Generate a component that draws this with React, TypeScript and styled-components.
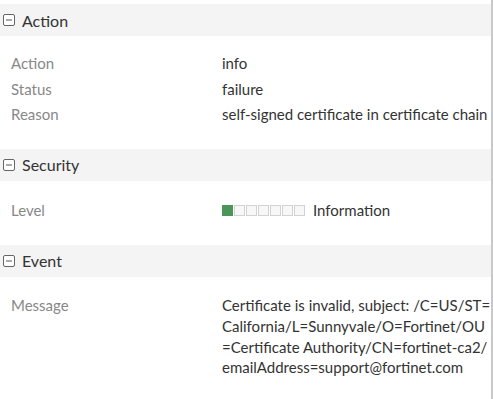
import React from "react";
import styled, { createGlobalStyle } from "styled-components";

const GlobalStyle = createGlobalStyle`
  html, body { margin: 0; padding: 0; background: #fff; }
  body { font-family: Lato, "Open Sans", sans-serif; }
`;

const Panel = styled.div`
  box-sizing: border-box;
  width: 493px;
  min-height: 399px;
  padding-top: 4px;
  border-right: 2px solid #c8c8c8;
`;

const Section = styled.section``;

const SectionHeader = styled.div`
  display: flex;
  align-items: center;
  gap: 7px;
  height: 32px;
  padding-left: 3px;
  background: #f4f4f4;
  color: #333;
  font-size: 16px;
`;

const SectionBody = styled.div<{ $top: number; $bottom: number }>`
  padding: ${(p) => p.$top}px 0 ${(p) => p.$bottom}px;
`;

const Row = styled.div`
  display: grid;
  grid-template-columns: 211px 270px;
  padding: 2.4px 0 2.4px 11px;
  font-size: 15px;
  line-height: 20.7px;
`;

const Label = styled.div`
  color: #888;
`;

const Value = styled.div`
  color: #333;
  word-break: break-all;
`;

const LevelWrap = styled.div`
  display: flex;
  align-items: center;
  color: #333;
`;

const Bars = styled.div`
  display: flex;
  gap: 1px;
  margin-right: 8px;
`;

const Bar = styled.span<{ $on: boolean }>`
  box-sizing: border-box;
  width: 11px;
  height: 11px;
  background: ${(p) => (p.$on ? "#4b9558" : "#f7f7f7")};
  border: 1px solid ${(p) => (p.$on ? "#4b9558" : "#d2d2d2")};
`;

const ToggleIcon = () => (
  <svg width="12" height="12" viewBox="0 0 12 12">
    <rect x="0.5" y="0.5" width="11" height="11" rx="1.5" fill="#fff" stroke="#666" />
    <line x1="3" y1="6" x2="9" y2="6" stroke="#555" strokeWidth="1" />
  </svg>
);

const Header = ({ title }: { title: string }) => (
  <SectionHeader>
    <ToggleIcon />
    <span>{title}</span>
  </SectionHeader>
);

export default function App() {
  return (
    <>
      <GlobalStyle />
      <Panel>
        <Section>
          <Header title="Action" />
          <SectionBody $top={15} $bottom={21.5}>
            <Row>
              <Label>Action</Label>
              <Value>info</Value>
            </Row>
            <Row>
              <Label>Status</Label>
              <Value>failure</Value>
            </Row>
            <Row>
              <Label>Reason</Label>
              <Value>self-signed certificate in certificate chain</Value>
            </Row>
          </SectionBody>
        </Section>
        <Section>
          <Header title="Security" />
          <SectionBody $top={17} $bottom={21.5}>
            <Row>
              <Label>Level</Label>
              <LevelWrap>
                <Bars>
                  {[0, 1, 2, 3, 4, 5, 6].map((i) => (
                    <Bar key={i} $on={i === 0} />
                  ))}
                </Bars>
                <span>Information</span>
              </LevelWrap>
            </Row>
          </SectionBody>
        </Section>
        <Section>
          <Header title="Event" />
          <SectionBody $top={16} $bottom={20}>
            <Row>
              <Label>Message</Label>
              <Value>
                Certificate is invalid, subject: /C=US/ST=California/L=Sunnyvale/O=Fortinet/OU=Certificate Authority/CN=fortinet-ca2/emailAddress=support@fortinet.com
              </Value>
            </Row>
          </SectionBody>
        </Section>
      </Panel>
    </>
  );
}
